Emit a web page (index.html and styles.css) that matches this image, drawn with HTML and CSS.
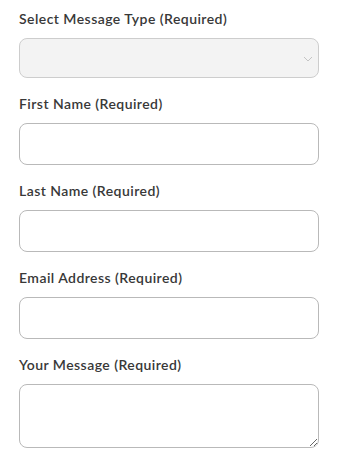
FILE: index.html
```html
<!DOCTYPE html>
<html lang="en">
<head>
    <meta charset="UTF-8">
    <meta name="viewport" content="width=device-width, initial-scale=1.0">
    <title>Contact Form</title>
    <link rel="stylesheet" href="styles.css">
</head>
<body>
    <!-- Contact form -->
    <form class="contact-form">
        <div class="field">
            <label for="type">Select Message Type (Required)</label>
            <div class="select-wrap">
                <select id="type" disabled>
                    <option></option>
                </select>
                <svg class="chevron" width="10" height="6" viewBox="0 0 10 6">
                    <path d="M1 1l4 4 4-4" fill="none" stroke="#c4c4c4" stroke-width="1"/>
                </svg>
            </div>
        </div>
        <div class="field">
            <label for="first">First Name (Required)</label>
            <input type="text" id="first">
        </div>
        <div class="field">
            <label for="last">Last Name (Required)</label>
            <input type="text" id="last">
        </div>
        <div class="field">
            <label for="email">Email Address (Required)</label>
            <input type="email" id="email">
        </div>
        <div class="field">
            <label for="message">Your Message (Required)</label>
            <textarea id="message"></textarea>
        </div>
    </form>
</body>
</html>
```

FILE: styles.css
```css
* {
    margin: 0;
    padding: 0;
    box-sizing: border-box;
}
body {
    font-family: Lato, Arial, sans-serif;
    background: #fff;
    color: #333;
}
.contact-form {
    padding: 9px 19px 0 19px;
    display: flex;
    flex-direction: column;
    gap: 16px;
}
.field {
    display: flex;
    flex-direction: column;
    gap: 9px;
}
.field label {
    font-size: 14px;
    font-weight: 600;
    line-height: 20px;
    letter-spacing: 0.45px;
    color: #383838;
}
/* Inputs */
.field input,
.field select,
.field textarea {
    width: 300px;
    height: 42px;
    border: 1px solid #b9b9b9;
    border-radius: 8px;
    background: #fff;
    font-family: inherit;
    font-size: 14px;
    padding: 0 10px;
    outline: none;
}
.select-wrap {
    position: relative;
    width: 300px;
}
.field select {
    height: 40px;
    background: #efefef;
    appearance: none;
    -webkit-appearance: none;
}
.chevron {
    position: absolute;
    right: 6px;
    top: 18px;
}
.field textarea {
    height: 64px;
    padding: 8px 10px;
    resize: vertical;
}
```
